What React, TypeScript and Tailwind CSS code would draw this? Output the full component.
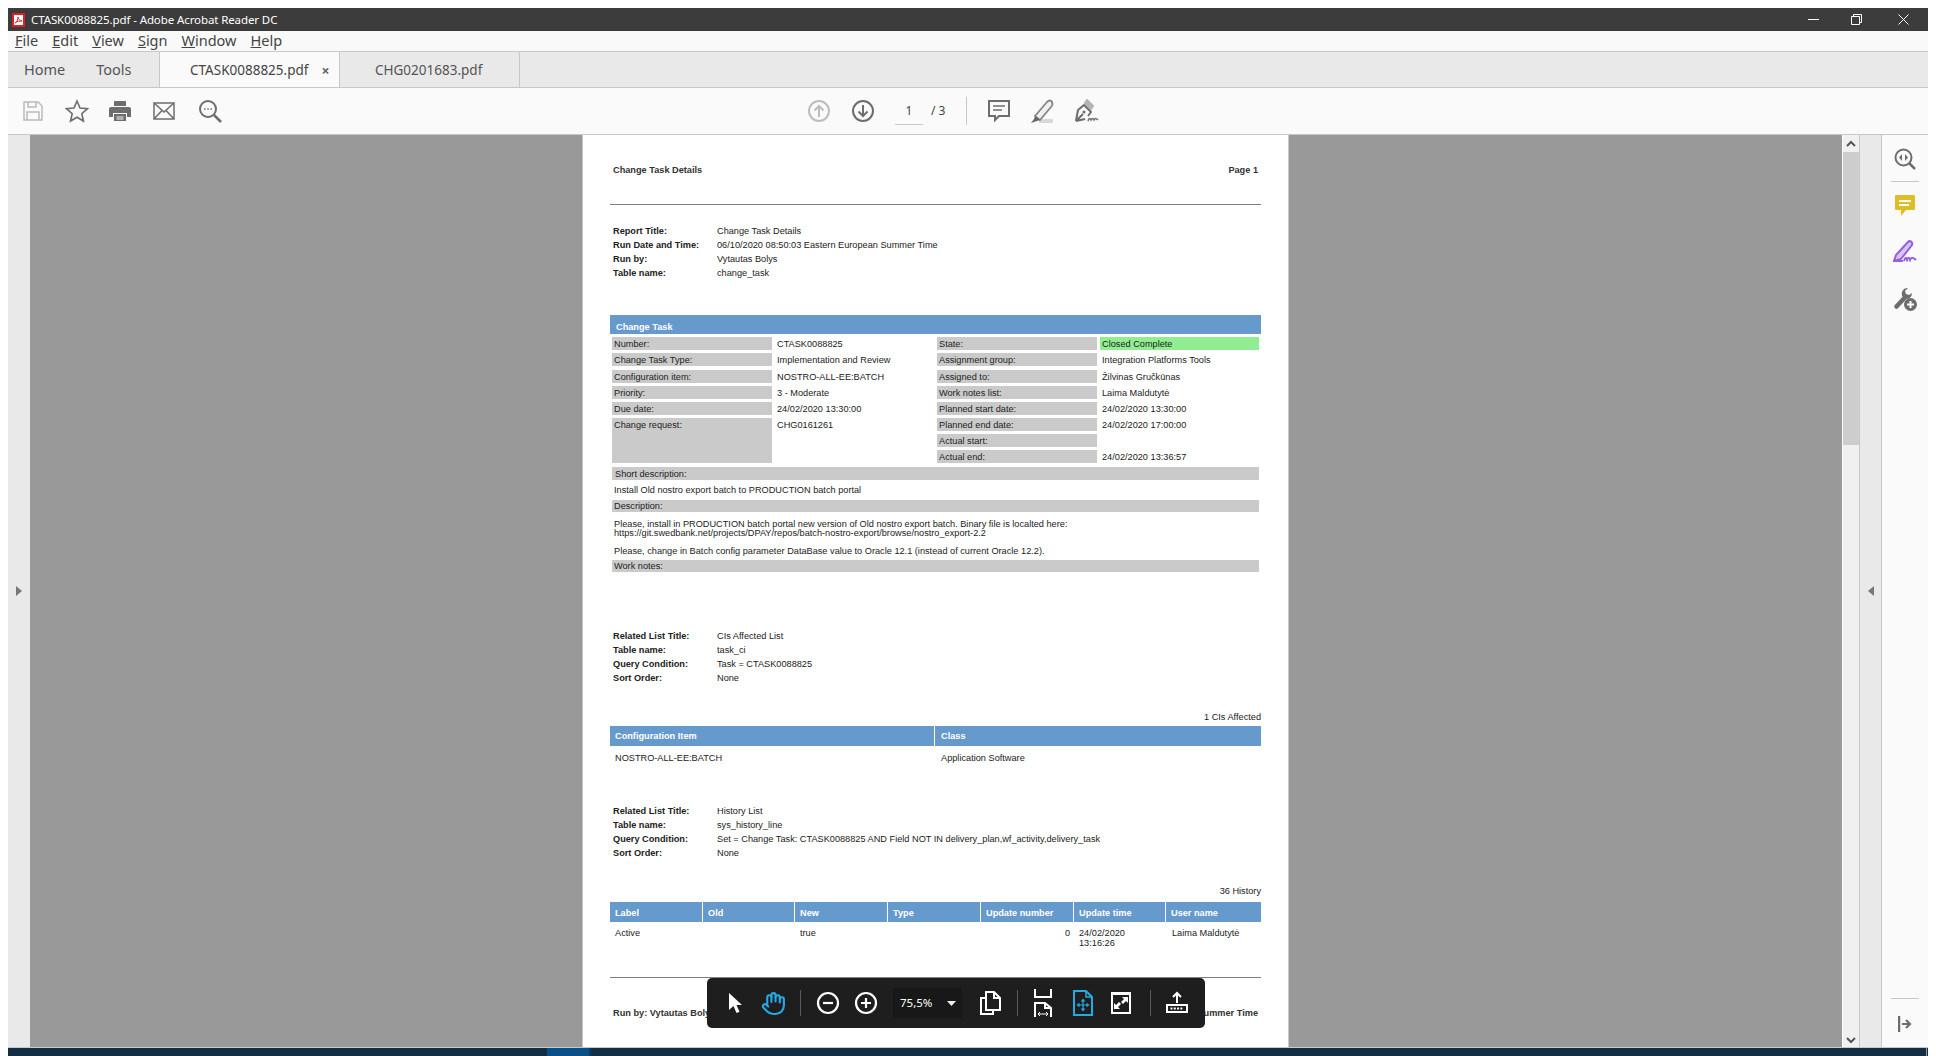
import React from 'react';
import { Hand } from 'lucide-react';

const ui = "font-['Noto_Sans',sans-serif]";

const Meta = ({ rows }: { rows: [string, string][] }) => (
    <div className="pl-[3px]">
        {rows.map(([k, v]) => (
            <div key={k} className="flex h-[14px] items-center">
                <div className="w-[104px] font-bold">{k}</div>
                <div>{v}</div>
            </div>
        ))}
    </div>
);

const Bar = ({ children, className = 'h-[13px]' }: { children: React.ReactNode; className?: string }) => (
    <div className={`flex items-center bg-[#cacaca] pl-[2px] ${className}`}>{children}</div>
);

const IconBox = ({ children, className = 'w-[38px]' }: { children: React.ReactNode; className?: string }) => (
    <div className={`flex h-full items-center justify-center ${className}`}>{children}</div>
);

const TbDivider = ({ className }: { className: string }) => <div className={`h-[26px] w-px bg-[#5a5a5a] ${className}`} />;

const details: { l: string; v: string; rl: string; rv: string; green?: boolean }[] = [
    { l: 'Number:', v: 'CTASK0088825', rl: 'State:', rv: 'Closed Complete', green: true },
    { l: 'Change Task Type:', v: 'Implementation and Review', rl: 'Assignment group:', rv: 'Integration Platforms Tools' },
    { l: 'Configuration item:', v: 'NOSTRO-ALL-EE:BATCH', rl: 'Assigned to:', rv: 'Žilvinas Gručkūnas' },
    { l: 'Priority:', v: '3 - Moderate', rl: 'Work notes list:', rv: 'Laima Maldutytė' },
    { l: 'Due date:', v: '24/02/2020 13:30:00', rl: 'Planned start date:', rv: '24/02/2020 13:30:00' },
];

const PdfPage = () => (
    <div className="relative h-full w-[707px] shrink-0 overflow-hidden border-x border-[#c8c8c8] bg-white pl-[27px] pr-[27px] font-['Liberation_Sans',sans-serif] text-[9.200px] leading-[10px] text-[#222]">
        <div className="mt-[29px] flex h-[12px] items-center justify-between pl-[3px] pr-[3px] font-bold text-[#333]">
            <span>Change Task Details</span>
            <span>Page 1</span>
        </div>
        <div className="mt-[28px] h-px bg-[#808080]" />
        <div className="mt-[19px]">
            <Meta
                rows={[
                    ['Report Title:', 'Change Task Details'],
                    ['Run Date and Time:', '06/10/2020 08:50:03 Eastern European Summer Time'],
                    ['Run by:', 'Vytautas Bolys'],
                    ['Table name:', 'change_task'],
                ]}
            />
        </div>

        <div className="mt-[35px] flex h-[19px] items-end bg-[#6699cc] pl-[6px] font-bold text-white">
            <span className="leading-[14px]">Change Task</span>
        </div>
        <div className="mt-[3px] grid grid-cols-[160px_165px_160px_162px] grid-rows-[16px_17px_16px_16px_16px_16px_16px_16px] pl-[2px]">
            {details.map((d) => (
                <React.Fragment key={d.l}>
                    <Bar>{d.l}</Bar>
                    <div className="flex h-[13px] items-center pl-[5px]">{d.v}</div>
                    <Bar>{d.rl}</Bar>
                    <div className={`ml-[3px] flex h-[13px] items-center pl-[2px] ${d.green ? 'bg-[#90ee90]' : ''}`}>{d.rv}</div>
                </React.Fragment>
            ))}
            <div className="row-span-3 flex h-[45px] items-start bg-[#cacaca] pl-[2px] pt-[2px]">Change request:</div>
            <div className="flex h-[13px] items-center pl-[5px]">CHG0161261</div>
            <Bar>Planned end date:</Bar>
            <div className="ml-[3px] flex h-[13px] items-center pl-[2px]">24/02/2020 17:00:00</div>
            <div className="col-start-3"><Bar>Actual start:</Bar></div>
            <div />
            <div className="col-start-3"><Bar>Actual end:</Bar></div>
            <div className="ml-[3px] flex h-[13px] items-center pl-[2px]">24/02/2020 13:36:57</div>
        </div>
        <div className="ml-[2px] mr-[2px] mt-[1px]">
            <Bar className="h-[13px] pl-[3px]">Short description:</Bar>
            <div className="flex h-[20px] items-center pl-[2px]">Install Old nostro export batch to PRODUCTION batch portal</div>
            <Bar className="h-[12px]">Description:</Bar>
            <div className="h-[48px] pl-[2px] pt-[8px] leading-[9px]">
                <div>Please, install in PRODUCTION batch portal new version of Old nostro export batch. Binary file is localted here:</div>
                <div>https://git.swedbank.net/projects/DPAY/repos/batch-nostro-export/browse/nostro_export-2.2</div>
                <div className="mt-[9px]">Please, change in Batch config parameter DataBase value to Oracle 12.1 (instead of current Oracle 12.2).</div>
            </div>
            <Bar className="h-[12px]">Work notes:</Bar>
        </div>

        <div className="mt-[57px]">
            <Meta
                rows={[
                    ['Related List Title:', 'CIs Affected List'],
                    ['Table name:', 'task_ci'],
                    ['Query Condition:', 'Task = CTASK0088825'],
                    ['Sort Order:', 'None'],
                ]}
            />
        </div>
        <div className="mt-[26px] flex h-[12px] items-center justify-end">1 CIs Affected</div>
        <div className="mt-[3px] grid h-[20px] grid-cols-[324px_1fr] gap-x-px font-bold text-white">
            <div className="flex items-center bg-[#6699cc] pl-[5px]">Configuration Item</div>
            <div className="flex items-center bg-[#6699cc] pl-[6px]">Class</div>
        </div>
        <div className="mt-[6px] grid h-[12px] grid-cols-[325px_1fr] items-center">
            <div className="pl-[5px]">NOSTRO-ALL-EE:BATCH</div>
            <div className="pl-[6px]">Application Software</div>
        </div>

        <div className="mt-[40px]">
            <Meta
                rows={[
                    ['Related List Title:', 'History List'],
                    ['Table name:', 'sys_history_line'],
                    ['Query Condition:', 'Set = Change Task: CTASK0088825 AND Field NOT IN delivery_plan,wf_activity,delivery_task'],
                    ['Sort Order:', 'None'],
                ]}
            />
        </div>
        <div className="mt-[25px] flex h-[12px] items-center justify-end">36 History</div>
        <div className="mt-[5px] grid h-[20px] grid-cols-[93px_92px_93px_93px_93px_92px_1fr] font-bold text-white">
            {['Label', 'Old', 'New', 'Type', 'Update number', 'Update time', 'User name'].map((h) => (
                <div key={h} className="flex items-center border-r border-white bg-[#6699cc] pl-[5px] pt-[2px] last:border-r-0">
                    {h}
                </div>
            ))}
        </div>
        <div className="mt-[6px] grid h-[20px] grid-cols-[93px_92px_93px_93px_93px_92px_1fr]">
            <div className="pl-[5px]">Active</div>
            <div />
            <div className="pl-[5px]">true</div>
            <div />
            <div className="pr-[4px] text-right">0</div>
            <div className="pl-[5px]">24/02/2020<br />13:16:26</div>
            <div className="pl-[6px]">Laima Maldutytė</div>
        </div>
        <div className="mt-[29px] h-px bg-[#808080]" />
        <div className="mt-[29px] flex h-[12px] items-center justify-between pl-[3px] pr-[3px] font-bold text-[#333]">
            <span>Run by: Vytautas Bolys</span>
            <span>06/10/2020 08:50:03 Eastern European Summer Time</span>
        </div>
    </div>
);

const FloatingBar = () => (
    <div className="absolute left-[699px] top-[843px] flex h-[50px] w-[498px] items-center rounded-[5px] bg-[#1e1e1e] pl-[9px]">
        <IconBox>
            <svg width="16" height="24" viewBox="0 0 16 24"><path d="M2 2v17l4.500-4 3 7 3-1.300-3-6.700H15z" fill="#fff" /></svg>
        </IconBox>
        <IconBox>
            <Hand size={25} strokeWidth={2} className="text-[#27a9e6]" />
        </IconBox>
        <TbDivider className="ml-[8px]" />
        <IconBox className="ml-[8px] w-[38px]">
            <svg width="24" height="24" viewBox="0 0 24 24" fill="none" stroke="#fff" strokeWidth="2.200"><circle cx="12" cy="12" r="10" /><path d="M7 12h10" /></svg>
        </IconBox>
        <IconBox>
            <svg width="24" height="24" viewBox="0 0 24 24" fill="none" stroke="#fff" strokeWidth="2.200"><circle cx="12" cy="12" r="10" /><path d="M7 12h10M12 7v10" /></svg>
        </IconBox>
        <div className={`ml-[8px] flex h-[30px] w-[69px] items-center bg-[#181818] pl-[7px] text-[11.500px] text-white ${ui}`}>
            <span>75,5%</span>
            <svg className="ml-[15px]" width="9" height="5" viewBox="0 0 9 5"><path d="M0 0h9L4.500 5z" fill="#eee" /></svg>
        </div>
        <IconBox className="ml-[9px] w-[38px]">
            <svg width="22" height="26" viewBox="0 0 22 26" fill="none" stroke="#fff" strokeWidth="2"><path d="M7 8H2v16h12v-4" /><path d="M7 2h8l6 6v12H7z" /><path d="M15 2v6h6" /></svg>
        </IconBox>
        <TbDivider className="ml-[8px]" />
        <IconBox className="ml-[6px] w-[38px]">
            <svg width="20" height="30" viewBox="0 0 20 30" fill="none" stroke="#fff" strokeWidth="2"><path d="M2 1v8h16V1" /><path d="M2 29V15h10l6 5v9" /><path d="M12 15v5h6" /><path d="M5 26h10M5 26l2-2M5 26l2 2M15 26l-2-2M15 26l-2 2" strokeWidth="1" /></svg>
        </IconBox>
        <IconBox className="ml-[2px] w-[38px]">
            <svg width="20" height="26" viewBox="0 0 20 26" fill="none" stroke="#27a9e6" strokeWidth="2"><path d="M1 1h12l6 6v18H1z" /><path d="M13 1v6h6" strokeWidth="1.500" /><path d="M10 11v8M6 15h8" strokeWidth="1.200" /><path d="M10 8.500l-2.300 3h4.600zM10 21.500l-2.300-3h4.600zM3.500 15l3-2.300v4.600zM16.500 15l-3-2.300v4.600z" fill="#27a9e6" stroke="none" /></svg>
        </IconBox>
        <IconBox>
            <svg width="20" height="22" viewBox="0 0 20 22"><path d="M0 0h20v22H0z" fill="#fff" /><path d="M2 3h16v17H2z" fill="#1e1e1e" /><path d="M11 5h6v6l-2-2-3 3-2-2 3-3zM9 17H3v-6l2 2 3-3 2 2-3 3z" fill="#fff" /></svg>
        </IconBox>
        <TbDivider className="ml-[10px]" />
        <IconBox className="ml-[7px] w-[38px]">
            <svg width="24" height="24" viewBox="0 0 24 24" fill="none" stroke="#fff" strokeWidth="2"><path d="M12 12V2M8 6l4-4 4 4" /><rect x="2" y="14" width="20" height="7" /><path d="M5.500 17.500h13" strokeDasharray="2 1.300" /></svg>
        </IconBox>
    </div>
);

const Tab = ({ children, className }: { children: React.ReactNode; className: string }) => (
    <div className={`flex h-full items-center ${className}`}>{children}</div>
);

const G = '#6d6d6d';

export default function App() {
    return (
        <div className={`flex h-[1056px] w-[1936px] flex-col overflow-hidden bg-white px-2 pt-2 ${ui}`}>
            {/* Title bar */}
            <div className="flex h-[23px] shrink-0 items-center bg-[#3c3c3c] text-[11.500px] text-white">
                <svg className="ml-[4px]" width="13" height="14" viewBox="0 0 13 14">
                    <rect width="13" height="14" rx="1" fill="#e02020" />
                    <rect x="2" y="2" width="9" height="10" fill="#fff" />
                    <path d="M3 10c2-1 3-4 3-6 0 2 2 4 4 4-2 0-5 0-7 2z" fill="none" stroke="#e02020" strokeWidth="1" />
                </svg>
                <span className="ml-[6px] tracking-[-0.1px]">CTASK0088825.pdf - Adobe Acrobat Reader DC</span>
                <svg className="ml-[1531px]" width="11" height="11" viewBox="0 0 11 11"><path d="M0 5.500h11" stroke="#fff" /></svg>
                <svg className="ml-[32px]" width="11" height="11" viewBox="0 0 11 11" fill="none" stroke="#fff"><path d="M.5 2.500h8v8h-8zM2.500 2.500v-2h8v8h-2" /></svg>
                <svg className="ml-[36px]" width="11" height="11" viewBox="0 0 11 11" fill="none" stroke="#fff"><path d="M.5.500l10 10M10.500.500l-10 10" /></svg>
            </div>
            {/* Menu */}
            <div className="flex h-[20px] shrink-0 items-center gap-[14px] bg-[#f9f9f9] pl-[7px] text-[14.500px] text-[#444]">
                {[['F', 'ile'], ['E', 'dit'], ['V', 'iew'], ['S', 'ign'], ['W', 'indow'], ['H', 'elp']].map(([a, b]) => (
                    <span key={a}><span className="underline">{a}</span>{b}</span>
                ))}
            </div>
            {/* Tabs */}
            <div className="flex h-[37px] shrink-0 items-stretch border-y border-[#c8c8c8] bg-[#e9e9e9] text-[14.500px] text-[#555]">
                <Tab className="w-[151px] gap-[31px] pl-[16px]">
                    <span>Home</span>
                    <span>Tools</span>
                </Tab>
                <Tab className="-mb-px h-auto w-[181px] border-x border-[#c8c8c8] bg-[#fafafa] pl-[30px] pt-[2px] text-[#444]">
                    <span className="text-[13.500px]">CTASK0088825.pdf</span>
                    <span className="ml-[13px] text-[14px] font-bold text-[#666]">×</span>
                </Tab>
                <Tab className="w-[180px] border-r border-[#c8c8c8] pl-[35px] pt-[2px]">
                    <span className="text-[13.500px]">CHG0201683.pdf</span>
                </Tab>
            </div>
            {/* Toolbar */}
            <div className="relative flex h-[47px] shrink-0 items-center border-b border-[#c8c8c8] bg-[#fafafa]">
                <svg className="ml-[15px]" width="20" height="20" viewBox="0 0 20 20" fill="none" stroke="#bbb" strokeWidth="1.500"><path d="M1 1h14l4 4v14H1z" /><path d="M5 1v5h8V1M4 19v-8h12v8" /></svg>
                <svg className="ml-[22px]" width="24" height="24" viewBox="0 0 24 24" fill="none" stroke={G} strokeWidth="1.600"><path d="M12 2l3 7 7.500.700-5.700 5 1.700 7.300L12 18.200 5.500 22l1.700-7.300-5.700-5L9 9z" /></svg>
                <svg className="ml-[20px]" width="22" height="22" viewBox="0 0 22 22" fill={G}><path d="M5 1h12v5H5z" /><path d="M2 7h18a2 2 0 0 1 2 2v8h-4v-4H4v4H0V9a2 2 0 0 1 2-2z" /><path d="M5 14h12v7H5z" /><path d="M7.500 16.500h7v1h-7zM7.500 18.500h7v1h-7z" fill="#fafafa" /></svg>
                <svg className="ml-[22px]" width="22" height="18" viewBox="0 0 22 18" fill="none" stroke={G} strokeWidth="1.500"><path d="M1 1h20v16H1z" /><path d="M1 1l10 9 10-9M1 17l8-8.500M21 17l-8-8.500" /></svg>
                <svg className="ml-[23px]" width="24" height="24" viewBox="0 0 24 24" fill="none" stroke={G} strokeWidth="2"><circle cx="10" cy="10" r="8" /><path d="M16 16l7 7" strokeWidth="2.500" /><path d="M6 10h1.500M9.300 10h1.500M12.500 10H14" strokeWidth="1.500" /></svg>
                <svg className="ml-[586px]" width="22" height="22" viewBox="0 0 22 22" fill="none" stroke="#bdbdbd" strokeWidth="2"><circle cx="11" cy="11" r="10" /><path d="M11 17V6M6.500 10.500L11 6l4.500 4.500" /></svg>
                <svg className="ml-[22px]" width="22" height="22" viewBox="0 0 22 22" fill="none" stroke={G} strokeWidth="2"><circle cx="11" cy="11" r="10" /><path d="M11 5v11M6.500 11.500L11 16l4.500-4.500" /></svg>
                <div className="ml-[21px] flex h-[28px] w-[28px] items-center justify-center border-b border-[#c8c8c8] text-[12px] text-[#444]">1</div>
                <span className="ml-[8px] text-[12px] text-[#444]">/ 3</span>
                <div className="ml-[21px] h-[28px] w-px bg-[#c8c8c8]" />
                <svg className="ml-[21px]" width="22" height="24" viewBox="0 0 22 24" fill="none" stroke={G} strokeWidth="2"><path d="M1 2h20v15H11l-4 4v-4H1z" /><path d="M5 7h12M5 11h9" strokeWidth="1.500" /></svg>
                <svg className="ml-[21px]" width="24" height="24" viewBox="0 0 24 24">
                    <path d="M8 20h14v4H8z" fill="#d8d8d8" />
                    <path d="M4 17L16 3c2-2 4-2 5 0s1 3-1 5L9 21z" fill="#efefef" stroke="#858585" strokeWidth="1.800" />
                    <path d="M0 24l3-4 1-3 5 4-3 1z" fill="#666" />
                </svg>
                <svg className="ml-[20px]" width="24" height="24" viewBox="0 0 24 24" fill="none" stroke={G} strokeWidth="2">
                    <path d="M12 1l6 6-2 3-6-6z" fill="#b5b5b5" stroke="#b5b5b5" />
                    <path d="M1 22l2-11 6-5 7 7-3 4" strokeLinejoin="round" />
                    <path d="M1 22l7-7M1 22l9-2" />
                    <circle cx="9" cy="13" r="1.500" fill={G} stroke="none" />
                    <path d="M13 22c1-3 2-3 3-1 1-2 2-2 3 0 1-2 2-2 4 0" strokeWidth="1.500" />
                </svg>
            </div>
            {/* Document area */}
            <div className="relative flex min-h-0 flex-1">
                <div className="flex w-[22px] shrink-0 items-center justify-center bg-[#e9e9e9]">
                    <svg width="6" height="10" viewBox="0 0 6 10"><path d="M0 0l6 5-6 5z" fill="#777" /></svg>
                </div>
                <div className="flex min-w-0 flex-1 justify-center bg-[#999]">
                    <div className="ml-[552px] mr-auto h-full"><PdfPage /></div>
                </div>
                {/* Scrollbar */}
                <div className="ml-px flex w-[16px] shrink-0 flex-col bg-[#f0f0f0]">
                    <div className="flex h-[17px] items-center justify-center bg-[#f0f0f0]">
                        <svg width="10" height="7" viewBox="0 0 10 7" fill="none" stroke="#555" strokeWidth="2"><path d="M1 6l4-4 4 4" /></svg>
                    </div>
                    <div className="h-[293px] bg-[#cdcdcd]" />
                    <div className="flex flex-1 items-end justify-center pb-[3px]">
                        <svg width="10" height="7" viewBox="0 0 10 7" fill="none" stroke="#555" strokeWidth="2"><path d="M1 1l4 4 4-4" /></svg>
                    </div>
                </div>
                <div className="flex w-[23px] shrink-0 items-center justify-center border-x border-[#c8c8c8] bg-[#e9e9e9]">
                    <svg width="6" height="10" viewBox="0 0 6 10"><path d="M6 0L0 5l6 5z" fill="#777" /></svg>
                </div>
                {/* Right rail */}
                <div className="flex w-[46px] shrink-0 flex-col items-center bg-[#fafafa] pt-[13px]">
                    <svg width="22" height="22" viewBox="0 0 22 22" fill="none" stroke={G} strokeWidth="2"><circle cx="9.500" cy="9.500" r="8" /><path d="M15 15l6 6" strokeWidth="2.500" /><path d="M8 6l-3 3.500L8 13zM11 6l3 3.500L11 13z" fill={G} stroke="none" /></svg>
                    <div className="mt-[11px] h-px w-[28px] bg-[#c8c8c8]" />
                    <svg className="mt-[13px]" width="20" height="21" viewBox="0 0 20 21"><path d="M1 0h18a1 1 0 0 1 1 1v13a1 1 0 0 1-1 1h-8l-5 6v-6H1a1 1 0 0 1-1-1V1a1 1 0 0 1 1-1z" fill="#e0bd26" /><path d="M4 5h12v2H4zM4 9h10v2H4z" fill="#fff" /></svg>
                    <svg className="mt-[24px]" width="24" height="22" viewBox="0 0 24 22"><path d="M1 21l2-6L15 2c2-2 5 0 4 3L8 19z" fill="#d9c4f2" stroke="#9461dc" strokeWidth="2" /><path d="M1 21h9M11 21c1-4 2-4 3-1 1-3 2-3 3 0 1-3 3-3 6 0" fill="none" stroke="#9461dc" strokeWidth="2" /></svg>
                    <svg className="mt-[25px]" width="24" height="24" viewBox="0 0 24 24">
                        <path d="M3.500 19.500L11 11.500" stroke={G} strokeWidth="4.500" strokeLinecap="round" />
                        <path d="M14 1a6 6 0 0 0-5 8l3 3a6 6 0 0 0 7-6l-3 2-3-1-1-3 3-3z" fill={G} />
                        <circle cx="17.500" cy="17.500" r="6.500" fill={G} />
                        <path d="M14 17.500h7M17.500 14v7" stroke="#fff" strokeWidth="2" />
                    </svg>
                    <div className="mt-auto h-px w-[28px] bg-[#c8c8c8]" />
                    <svg className="mb-[15px] mt-[17px]" width="14" height="16" viewBox="0 0 14 16"><path d="M1 0v16" stroke={G} strokeWidth="2.500" /><path d="M4 8h8M8 4l4 4-4 4" fill="none" stroke={G} strokeWidth="2.200" /></svg>
                </div>
                <FloatingBar />
            </div>
            {/* Taskbar peeking in below the window */}
            <div className="flex h-[9px] shrink-0 overflow-hidden border-t border-[#c8c8c8] bg-[#122d44]">
                <div className="ml-[539px] h-full w-[44px] border-r-2 border-[#0c3a5e] bg-[#0a5088]" />
                <div className="ml-[1236px] pt-[5px] text-[11px] leading-[14px] text-white">20:42</div>
                <div className="ml-[71px] h-full w-px bg-[#8a9aa8]" />
            </div>
        </div>
    );
}
